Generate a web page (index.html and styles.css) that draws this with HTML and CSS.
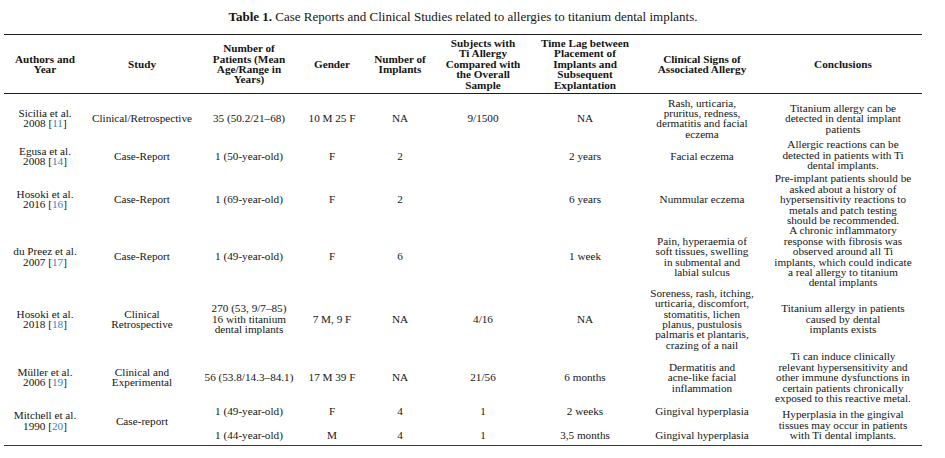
FILE: index.html
```html
<!DOCTYPE html>
<html lang="en">
<head>
  <meta charset="UTF-8">
  <title>Table 1 - Titanium allergy</title>
  <link rel="stylesheet" href="styles.css">
</head>
<body>

  <div class="page">
    <p class="caption"><b>Table 1.</b> Case Reports and Clinical Studies related to allergies to titanium dental implants.</p>

    <table class="cases">
      <colgroup>
        <col class="c-auth">
        <col class="c-study">
        <col class="c-pat">
        <col class="c-gen">
        <col class="c-impl">
        <col class="c-subj">
        <col class="c-lag">
        <col class="c-signs">
        <col class="c-concl">
      </colgroup>
      <thead>
        <tr>
          <th>Authors and<br>Year</th>
          <th>Study</th>
          <th>Number of<br>Patients (Mean<br>Age/Range in<br>Years)</th>
          <th>Gender</th>
          <th>Number of<br>Implants</th>
          <th>Subjects with<br>Ti Allergy<br>Compared with<br>the Overall<br>Sample</th>
          <th>Time Lag between<br>Placement of<br>Implants and<br>Subsequent<br>Explantation</th>
          <th>Clinical Signs of<br>Associated Allergy</th>
          <th>Conclusions</th>
        </tr>
      </thead>
      <tbody>
        <tr class="first">
          <td>Sicilia et al.<br>2008 [<span class="ref">11</span>]</td>
          <td>Clinical/Retrospective</td>
          <td>35 (50.2/21–68)</td>
          <td>10 M 25 F</td>
          <td>NA</td>
          <td>9/1500</td>
          <td>NA</td>
          <td>Rash, urticaria,<br>pruritus, redness,<br>dermatitis and facial<br>eczema</td>
          <td>Titanium allergy can be<br>detected in dental implant<br>patients</td>
        </tr>
        <tr class="loose">
          <td>Egusa et al.<br>2008 [<span class="ref">14</span>]</td>
          <td>Case-Report</td>
          <td>1 (50-year-old)</td>
          <td>F</td>
          <td>2</td>
          <td></td>
          <td>2 years</td>
          <td>Facial eczema</td>
          <td class="top">Allergic reactions can be<br>detected in patients with Ti<br>dental implants.</td>
        </tr>
        <tr>
          <td>Hosoki et al.<br>2016 [<span class="ref">16</span>]</td>
          <td>Case-Report</td>
          <td>1 (69-year-old)</td>
          <td>F</td>
          <td>2</td>
          <td></td>
          <td>6 years</td>
          <td>Nummular eczema</td>
          <td>Pre-implant patients should be<br>asked about a history of<br>hypersensitivity reactions to<br>metals and patch testing<br>should be recommended.</td>
        </tr>
        <tr>
          <td>du Preez et al.<br>2007 [<span class="ref">17</span>]</td>
          <td>Case-Report</td>
          <td>1 (49-year-old)</td>
          <td>F</td>
          <td>6</td>
          <td></td>
          <td>1 week</td>
          <td>Pain, hyperaemia of<br>soft tissues, swelling<br>in submental and<br>labial sulcus</td>
          <td>A chronic inflammatory<br>response with fibrosis was<br>observed around all Ti<br>implants, which could indicate<br>a real allergy to titanium<br>dental implants</td>
        </tr>
        <tr>
          <td>Hosoki et al.<br>2018 [<span class="ref">18</span>]</td>
          <td>Clinical<br>Retrospective</td>
          <td>270 (53, 9/7–85)<br>16 with titanium<br>dental implants</td>
          <td>7 M, 9 F</td>
          <td>NA</td>
          <td>4/16</td>
          <td>NA</td>
          <td>Soreness, rash, itching,<br>urticaria, discomfort,<br>stomatitis, lichen<br>planus, pustulosis<br>palmaris et plantaris,<br>crazing of a nail</td>
          <td>Titanium allergy in patients<br>caused by dental<br>implants exists</td>
        </tr>
        <tr class="roomy">
          <td>Müller et al.<br>2006 [<span class="ref">19</span>]</td>
          <td>Clinical and<br>Experimental</td>
          <td>56 (53.8/14.3–84.1)</td>
          <td>17 M 39 F</td>
          <td>NA</td>
          <td>21/56</td>
          <td>6 months</td>
          <td>Dermatitis and<br>acne-like facial<br>inflammation</td>
          <td>Ti can induce clinically<br>relevant hypersensitivity and<br>other immune dysfunctions in<br>certain patients chronically<br>exposed to this reactive metal.</td>
        </tr>
        <tr class="split-a">
          <td rowspan="2" class="end lift">Mitchell et al.<br>1990 [<span class="ref">20</span>]</td>
          <td rowspan="2" class="end lift">Case-report</td>
          <td>1 (49-year-old)</td>
          <td>F</td>
          <td>4</td>
          <td>1</td>
          <td>2 weeks</td>
          <td>Gingival hyperplasia</td>
          <td rowspan="2" class="end">Hyperplasia in the gingival<br>tissues may occur in patients<br>with Ti dental implants.</td>
        </tr>
        <tr class="split-b">
          <td>1 (44-year-old)</td>
          <td>M</td>
          <td>4</td>
          <td>1</td>
          <td>3,5 months</td>
          <td>Gingival hyperplasia</td>
        </tr>
      </tbody>
    </table>
  </div>

</body>
</html>
```

FILE: styles.css
```css
body {
  margin: 0;
  background: #fff;
  color: #151515;
  font-family: "Liberation Serif", "Times New Roman", serif;
}

.page {
  width: 918px;
  padding: 9px 0 0 4px;
}

.caption {
  margin: 0 0 9px;
  text-align: center;
  font-size: 13px;
  line-height: 16px;
}

.cases {
  width: 918px;
  border-collapse: collapse;
  table-layout: fixed;
  font-size: 11.2px;
  line-height: 10.4px;
}

.c-auth { width: 82px; }
.c-study { width: 112px; }
.c-pat { width: 102px; }
.c-gen { width: 64px; }
.c-impl { width: 72px; }
.c-subj { width: 94px; }
.c-lag { width: 110px; }
.c-signs { width: 124px; }
.c-concl { width: 158px; }

.cases th,
.cases td {
  padding: 0;
  text-align: center;
  vertical-align: middle;
  white-space: nowrap;
}

.cases th {
  font-weight: bold;
  padding: 3px 0 2.5px;
  border-top: 1.5px solid #1e1e1e;
  border-bottom: 1px solid #1e1e1e;
}

.first td {
  padding-top: 4px;
}

.loose td {
  padding: 1.5px 0;
}

.loose td.top {
  padding: 0 0 3px;
}

.roomy td {
  padding: 1px 0;
}

.split-a td {
  height: 18px;
}

.split-a td:not(.end) {
  vertical-align: top;
  padding-top: 2px;
}

.split-b td {
  height: 21px;
}

.split-b td,
.cases td.end {
  border-bottom: 1.5px solid #3a3a3a;
}

.cases td.lift {
  padding-bottom: 8px;
}

.ref {
  color: #3b7cc0;
}
```
